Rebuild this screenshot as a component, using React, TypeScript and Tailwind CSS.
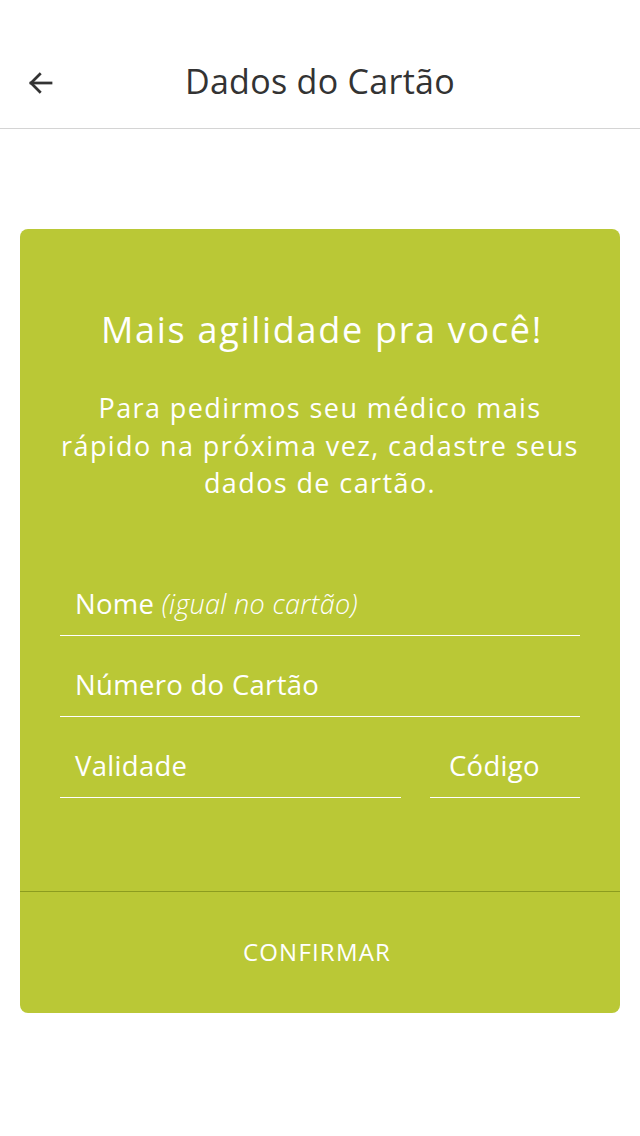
import React from 'react';

const font = { fontFamily: '"Open Sans", "Noto Sans", sans-serif' };

const Field = ({ label, hint, className = '' }: { label: string; hint?: string; className?: string }) => (
  <div className={`border-b border-white pt-[31px] pb-[13px] pl-[15px] text-[27.5px] leading-[36px] text-white tracking-[0.3px] ${className}`}>
    {label}
    {hint && <span className="font-light italic text-[27px]"> {hint}</span>}
  </div>
);

export default function App() {
  return (
    <div className="min-h-[1136px] bg-white" style={font}>
      {/* Header */}
      <div className="relative flex h-[129px] items-center justify-center border-b border-[#d4d4d4]">
        <button className="absolute left-[26px] top-[68px] text-[#333]">
          <svg width="30" height="30" viewBox="0 0 24 24" fill="none" stroke="currentColor" strokeWidth="2.2" strokeLinecap="square">
            <path d="M20 12H4" />
            <path d="M11 5l-7 7 7 7" />
          </svg>
        </button>
        <h1 className="mt-[34px] text-[34px] leading-none text-[#333] tracking-[0.3px]">Dados do Cartão</h1>
      </div>

      {/* Card */}
      <div className="mx-[20px] mt-[100px] rounded-[8px] bg-[#bac836]">
        <div className="px-[40px] pt-[79px] pb-[93px]">
          <h2 className="pl-[4px] text-center text-[36px] leading-[44px] text-white tracking-[1.7px]">Mais agilidade pra você!</h2>
          <p className="-mx-[4px] mt-[37px] text-center text-[27px] leading-[37.5px] text-white tracking-[1.4px]">
            Para pedirmos seu médico mais rápido na próxima vez, cadastre seus dados de cartão.
          </p>
          <div className="mt-[53px]">
            <Field label="Nome" hint="(igual no cartão)" />
            <Field label="Número do Cartão" />
            <div className="flex gap-[29px]">
              <Field label="Validade" className="flex-1" />
              <Field label="Código" className="w-[150px] !pl-[19px]" />
            </div>
          </div>
        </div>
        <div className="border-t border-[#8c9c1f]">
          <button className="flex h-[121px] w-full items-center justify-center pr-[6px] text-[24px] tracking-[1.2px] text-white">
            CONFIRMAR
          </button>
        </div>
      </div>
    </div>
  );
}
